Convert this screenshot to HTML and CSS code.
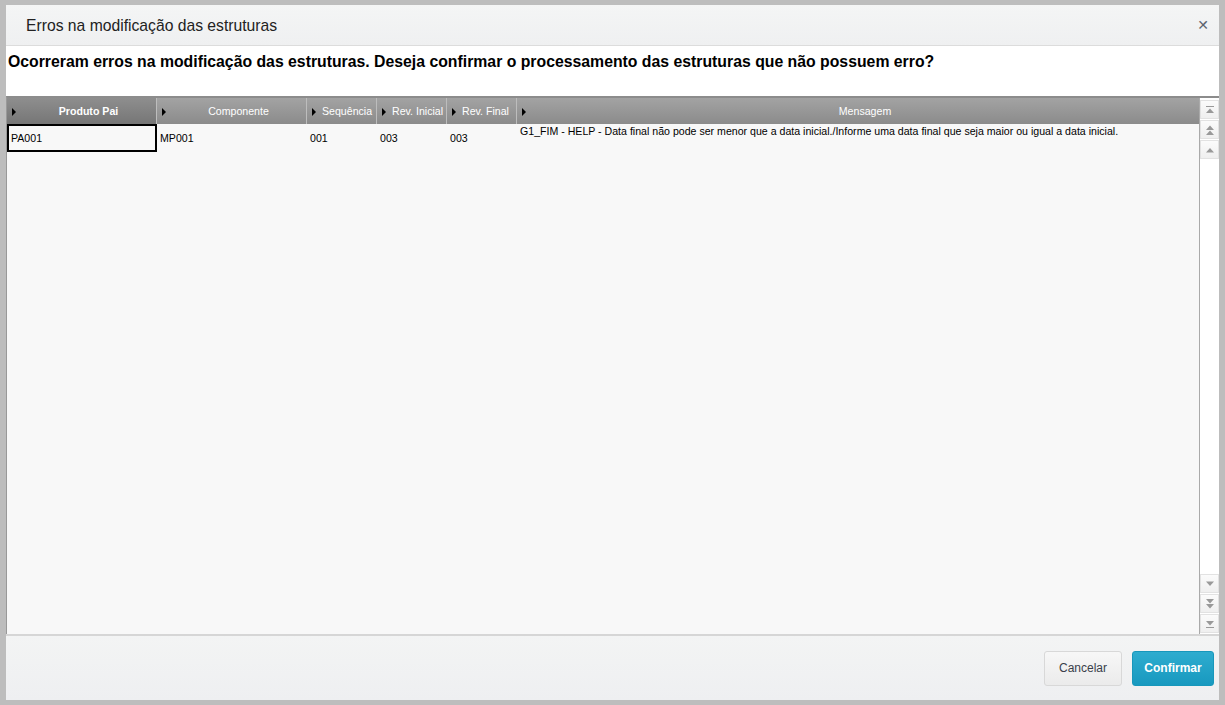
FILE: index.html
```html
<!DOCTYPE html>
<html lang="pt">
<head>
    <meta charset="UTF-8">
    <title>Erros na modificação das estruturas</title>
    <link rel="stylesheet" href="styles.css">
</head>
<body>
<div class="dialog">
    <div class="title-bar">
        <span class="title">Erros na modificação das estruturas</span>
        <span class="close">&#x2715;</span>
    </div>
    <div class="question">Ocorreram erros na modificação das estruturas. Deseja confirmar o processamento das estruturas que não possuem erro?</div>

    <div class="grid">
        <div class="grid-main">
            <div class="grid-head">
                <div class="col c1 selected"><i class="arrow"></i><span>Produto Pai</span></div>
                <div class="col c2"><i class="arrow"></i><span>Componente</span></div>
                <div class="col c3"><i class="arrow"></i><span>Sequência</span></div>
                <div class="col c4"><i class="arrow"></i><span>Rev. Inicial</span></div>
                <div class="col c5"><i class="arrow"></i><span>Rev. Final</span></div>
                <div class="col c6"><i class="arrow"></i><span>Mensagem</span></div>
            </div>
            <div class="grid-row">
                <div class="cell c1 focus">PA001</div>
                <div class="cell c2">MP001</div>
                <div class="cell c3">001</div>
                <div class="cell c4">003</div>
                <div class="cell c5">003</div>
                <div class="cell c6 msg">G1_FIM - HELP - Data final não pode ser menor que a data inicial./Informe uma data final que seja maior ou igual a data inicial.</div>
            </div>
        </div>
        <div class="scroll">
            <div class="sbtn"><svg width="10" height="10" viewBox="0 0 10 10"><rect x="1" y="1" width="8" height="1" fill="#999"/><path d="M1 8 L5 3.5 L9 8 Z" fill="#999"/></svg></div>
            <div class="sbtn"><svg width="10" height="12" viewBox="0 0 10 12"><path d="M1 6 L5 1.5 L9 6 Z M1 11 L5 6.5 L9 11 Z" fill="#999"/></svg></div>
            <div class="sbtn"><svg width="10" height="10" viewBox="0 0 10 10"><path d="M1 7.5 L5 3 L9 7.5 Z" fill="#999"/></svg></div>
            <div class="track"></div>
            <div class="sbtn"><svg width="10" height="10" viewBox="0 0 10 10"><path d="M1 2.5 L5 7 L9 2.5 Z" fill="#999"/></svg></div>
            <div class="sbtn"><svg width="10" height="12" viewBox="0 0 10 12"><path d="M1 1 L5 5.5 L9 1 Z M1 6 L5 10.5 L9 6 Z" fill="#999"/></svg></div>
            <div class="sbtn last"><svg width="10" height="10" viewBox="0 0 10 10"><path d="M1 2 L5 6.5 L9 2 Z" fill="#999"/><rect x="1" y="8" width="8" height="1" fill="#999"/></svg></div>
        </div>
    </div>

    <div class="footer">
        <button class="btn">Cancelar</button>
        <button class="btn primary">Confirmar</button>
    </div>
</div>
</body>
</html>
```

FILE: styles.css
```css
*{
    padding: 0;
    margin: 0;
    box-sizing: border-box;
}
html,body{
    height: 100%;
}
body{
    background: #bdbdbd;
    padding: 5px 6px 5px 6px;
    font-family: "Liberation Sans", Arial, sans-serif;
    color: #000;
}
.dialog{
    height: 695px;
    width: 1213px;
    background: #fff;
    display: flex;
    flex-direction: column;
}
.title-bar{
    height: 41px;
    background: linear-gradient(#f4f5f5, #eff0f1);
    border-bottom: 1px solid #dcdcdc;
    display: flex;
    align-items: center;
    justify-content: space-between;
    padding: 0 10px 0 20px;
}
.title{
    font-size: 15.7px;
    color: #222;
    margin-top: 1px;
}
.close{
    font-size: 14px;
    font-weight: bold;
    color: #5d6470;
    font-family: "DejaVu Sans", sans-serif;
}
.question{
    height: 50px;
    font-size: 15.8px;
    font-weight: bold;
    padding: 7px 0 0 2px;
}
.grid{
    flex: 1;
    display: flex;
    border-top: 2px solid #8c8c8c;
    border-left: 1px solid #999;
    background: #f8f8f8;
}
.grid-main{
    flex: 1;
    border-right: 1px solid #aaa;
}
.grid-head{
    display: flex;
    height: 26px;
    background: linear-gradient(#a3a3a3, #8b8b8b);
}
.col{
    position: relative;
    display: flex;
    align-items: center;
    justify-content: center;
    color: #fff;
    font-size: 10.6px;
    border-right: 1px solid #bdbdbd;
    padding-left: 14px;
}
.col.selected{
    background: linear-gradient(#8e8e8e, #767676);
    font-weight: bold;
}
.col.c3, .col.c4, .col.c5{
    justify-content: flex-start;
    padding-left: 15px;
}
.col.c6{
    border-right: none;
}
.arrow{
    position: absolute;
    left: 5px;
    top: 10px;
    width: 0;
    height: 0;
    border-top: 4px solid transparent;
    border-bottom: 4px solid transparent;
    border-left: 4px solid #000;
}
.c1{ width: 150px; }
.c2{ width: 150px; }
.c3{ width: 70px; }
.c4{ width: 70px; }
.c5{ width: 70px; }
.c6{ flex: 1; }
.grid-row{
    display: flex;
    height: 28px;
    font-size: 10.6px;
}
.cell{
    display: flex;
    align-items: center;
    padding-left: 3px;
}
.cell.focus{
    border: 2px solid #000;
    padding-left: 2px;
}
.cell.msg{
    align-items: flex-start;
    padding-top: 1px;
    padding-left: 3px;
}
.scroll{
    width: 19px;
    display: flex;
    flex-direction: column;
    background: #fff;
    padding-top: 2px;
}
.sbtn{
    height: 19px;
    display: flex;
    align-items: center;
    justify-content: center;
    background: linear-gradient(#fbfbfb, #efefef);
    border: 1px solid #e2e2e2;
    margin-bottom: 1px;
}
.track{
    flex: 1;
    background: #fff;
}
.footer{
    height: 66px;
    border-top: 2px solid #d6d6d6;
    background: linear-gradient(#f3f4f4, #eeeff1);
    display: flex;
    justify-content: flex-end;
    align-items: center;
    gap: 10px;
    padding: 0 5px 0 0;
}
.btn{
    font-family: "Liberation Sans", Arial, sans-serif;
    font-size: 12px;
    height: 35px;
    border-radius: 3px;
    border: 1px solid #d8d8d8;
    background: linear-gradient(#f7f7f7, #ebebeb);
    color: #3a3f4a;
    width: 78px;
}
.btn.primary{
    width: 82px;
    border: 1px solid #1797bb;
    background: linear-gradient(#2eaccf, #1899bf);
    color: #fff;
    font-weight: bold;
}
```
